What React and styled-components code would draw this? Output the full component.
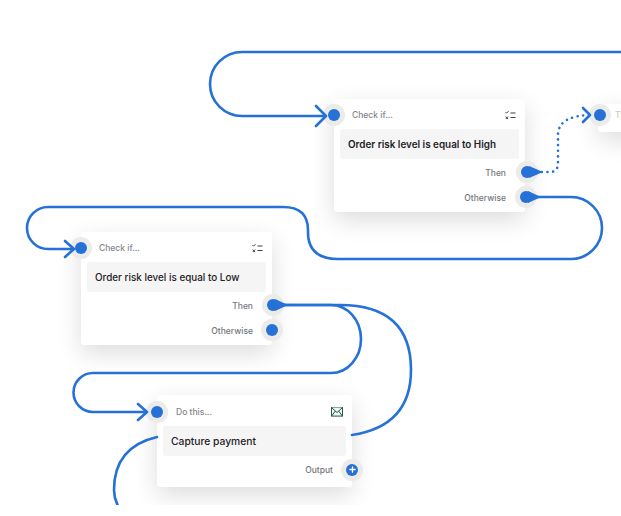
import styled, { createGlobalStyle } from "styled-components";
import { Plus } from "lucide-react";

const GlobalStyle = createGlobalStyle`
  html, body {
    margin: 0;
    background: #fff;
    font-family: Inter, "Liberation Sans", sans-serif;
  }
`;

const Canvas = styled.div`
  position: relative;
  width: 621px;
  height: 505px;
  overflow: hidden;
  background: #fff;
`;

const Wires = styled.svg`
  position: absolute;
  top: 0;
  left: 0;
  pointer-events: none;
`;

const Wire = styled.path`
  fill: none;
  stroke: #2571d6;
  stroke-width: 2.6;
  stroke-linecap: round;
  stroke-linejoin: round;
`;

const DottedWire = styled(Wire)`
  stroke-dasharray: 0.1 5.6;
  stroke-width: 2.6;
`;

const Taper = styled.path`
  fill: #2571d6;
`;

const Node = styled.div`
  position: absolute;
  left: ${(p) => p.$x}px;
  top: ${(p) => p.$y}px;
  width: ${(p) => p.$w}px;
  box-sizing: border-box;
  padding: 0 6px ${(p) => p.$bottom || 2}px;
  background: #fff;
  border-radius: 3px;
  box-shadow: 0 8px 24px rgba(0, 0, 0, 0.14);
`;

const Header = styled.div`
  display: flex;
  align-items: center;
  justify-content: space-between;
  box-sizing: border-box;
  height: ${(p) => p.$height || 30}px;
  padding: 2px 3px 0 ${(p) => p.$left || 12}px;
`;

const Kind = styled.span`
  font-size: 8.5px;
  font-weight: 500;
  color: #82858a;
`;

const Condition = styled.div`
  display: flex;
  align-items: center;
  height: 30px;
  padding: 0 8px;
  background: #f6f5f5;
  border-radius: 3px;
  font-size: ${(p) => p.$size || 9.9}px;
  font-weight: ${(p) => p.$weight || 500};
  color: #1f2226;
`;

const Outputs = styled.div`
  display: flex;
  flex-direction: column;
  padding-top: 2px;
`;

const OutputRow = styled.div`
  position: relative;
  display: flex;
  align-items: center;
  justify-content: flex-end;
  height: 24.5px;
  padding-right: 13px;
  font-size: 8.5px;
  font-weight: 500;
  color: #74777c;
`;

const Port = styled.span`
  position: absolute;
  display: flex;
  align-items: center;
  justify-content: center;
  width: 22px;
  height: 22px;
  border-radius: 50%;
  background: #ebebea;
  color: #fff;
  ${(p) =>
    p.$side === "in"
      ? `left: ${-11 + (p.$shift || 0)}px; top: ${p.$top ?? 5}px;`
      : `right: ${-17 - (p.$shift || 0)}px; top: ${p.$top ?? 0}px;`}

  &::after {
    content: "";
    position: absolute;
    left: 5px;
    top: 5px;
    width: 12px;
    height: 12px;
    border-radius: 50%;
    background: #2571d6;
  }

  svg {
    position: relative;
    z-index: 1;
  }
`;

const Ghost = styled.div`
  position: absolute;
  left: 598px;
  top: 104px;
  width: 60px;
  height: 28px;
  box-sizing: border-box;
  padding: 6px 0 0 17px;
  background: #fff;
  border-radius: 3px;
  box-shadow: 0 8px 24px rgba(0, 0, 0, 0.14);
  font-size: 8.5px;
  font-weight: 500;
  color: #c9cacc;
`;

const ChecklistIcon = () => (
  <svg width="11" height="9" viewBox="0 0 11 9" fill="none" stroke="#3a3d41" strokeWidth="1">
    <path d="M0.5 1.2l1 1 2-2M0.7 5.5l2.4 2.6M3.1 5.5L0.7 8.1M5.5 2h5M5.5 6.5h5" />
  </svg>
);

const MailIcon = () => (
  <svg width="12" height="10" viewBox="0 0 12 10" fill="#eef5f1" stroke="#24594a" strokeWidth="1">
    <rect x="0.5" y="0.5" width="11" height="8.6" />
    <path d="M0.5 0.5L6 5.5l5.5-5M0.5 9.1L4.4 4M11.5 9.1L7.6 4" />
  </svg>
);

const CheckNode = ({ x, y, text, weight, thenShift, otherShift }) => (
  <Node $x={x} $y={y} $w={191}>
    <Port $side="in" />
    <Header>
      <Kind>Check if...</Kind>
      <ChecklistIcon />
    </Header>
    <Condition $weight={weight}>{text}</Condition>
    <Outputs>
      <OutputRow>
        Then
        <Port $side="out" $shift={thenShift} />
      </OutputRow>
      <OutputRow>
        Otherwise
        <Port $side="out" $shift={otherShift} />
      </OutputRow>
    </Outputs>
  </Node>
);

export default function App() {
  return (
    <Canvas>
      <GlobalStyle />

      <CheckNode x={334} y={99} text="Order risk level is equal to High" weight={600} thenShift={2} otherShift={0.5} />
      <CheckNode x={81} y={232} text="Order risk level is equal to Low" thenShift={1} otherShift={0} />

      <Node $x={157} $y={395} $w={195} $bottom={4.5}>
        <Port $side="in" $top={6} />
        <Header $height={31} $left={13}>
          <Kind>Do this...</Kind>
          <MailIcon />
        </Header>
        <Condition $size={10.3}>Capture payment</Condition>
        <Outputs>
          <OutputRow>
            Output
            <Port $side="out" $top={0.5}>
              <Plus size={9} strokeWidth={3.5} />
            </Port>
          </OutputRow>
        </Outputs>
      </Node>

      <Ghost>
        <Port $side="in" $shift={2} $top={0} />
        Th
      </Ghost>

      <Wires width="621" height="505" viewBox="0 0 621 505">
        <Wire d="M621 52 H242 A32 32 0 0 0 242 116 H326 M316 106 L326 116 L316 126" />
        <DottedWire d="M536 172 H550 Q558 172 558 163 V135 Q558 116 590 115" />
        <Wire d="M583 108 L590 115 L583 122" />
        <Wire d="M526 197 H571 A31 31 0 0 1 571 259 H338 Q308 259 308 232 V230 Q308 207 283 207 H48 A21 21 0 0 0 48 249 H73 M65 241 L74 249 L65 257" />
        <Wire d="M273 305 H331 A30 34 0 0 1 331 373 H93 A19.5 19.5 0 0 0 93 412 H147 M138 404 L147 412 L138 420" />
        <Wire d="M273 305 H340 Q411 305 411 370 Q411 426 352 435" />
        <Wire d="M157 437 Q114 447 114 490 Q114 498 118 506" />
        <Taper d="M529 166 L543 172 L529 178 Z" />
        <Taper d="M528 191 L541 197 L528 203 Z" />
        <Taper d="M275 299 L288 305 L275 311 Z" />
      </Wires>
    </Canvas>
  );
}
